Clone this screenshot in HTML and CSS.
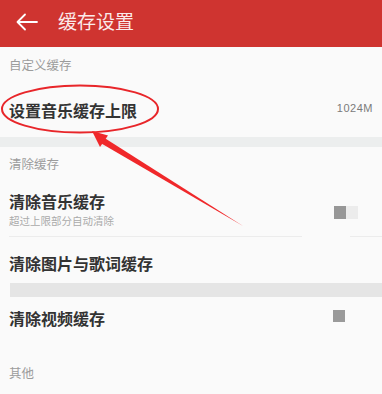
FILE: index.html
```html
<!DOCTYPE html>
<html>
<head>
<meta charset="utf-8">
<link rel="stylesheet" href="styles.css">
</head>
<body>
<div class="page">
  <div class="header">
    <svg class="back" width="22" height="18" viewBox="0 0 22 18"><path d="M21 9H2M9 1.5L1.5 9L9 16.5" fill="none" stroke="#fff" stroke-width="1.8" stroke-linecap="round" stroke-linejoin="round"/></svg>
    <span class="title">缓存设置</span>
  </div>
  <div class="label l1">自定义缓存</div>
  <div class="item i1">
    <span class="name">设置音乐缓存上限</span>
    <span class="value">1024M</span>
  </div>
  <div class="band b1"></div>
  <div class="label l2">清除缓存</div>
  <div class="item i2">
    <div class="texts">
      <span class="name">清除音乐缓存</span>
      <span class="sub">超过上限部分自动清除</span>
    </div>
    <span class="toggle"><span class="knob"></span><span class="track"></span></span>
  </div>
  <div class="divider"><span class="dl"></span><span class="dr"></span></div>
  <div class="item i3"><span class="name">清除图片与歌词缓存</span></div>
  <div class="band b2"></div>
  <div class="item i4">
    <span class="name">清除视频缓存</span>
    <span class="square"></span>
  </div>
  <div class="label l3">其他</div>
  <svg class="annot" width="382" height="394" viewBox="0 0 382 394">
    <ellipse cx="80" cy="109" rx="78" ry="23.5" fill="none" stroke="#e8262a" stroke-width="2"/>
    <polygon points="98.4,141.8 101.8,136.2 243,226" fill="#f0282a"/>
    <polygon points="92,131 108,135.5 100,147" fill="#f0282a"/>
  </svg>
</div>
</body>
</html>
```

FILE: styles.css
```css
html, body { margin: 0; padding: 0; }
body {
  width: 382px;
  height: 394px;
  overflow: hidden;
  background: #fafafa;
  font-family: "Noto Sans CJK SC", "Noto Sans", sans-serif;
}
.page { position: relative; width: 382px; height: 394px; }
.header {
  height: 47px;
  background: #cf3430;
  display: flex;
  align-items: center;
  padding-left: 16px;
  box-sizing: border-box;
}
.back { display: block; margin-top: -4px; }
.title {
  color: #fbeaea;
  font-size: 19px;
  margin-left: 20px;
  margin-top: -5px;
  line-height: 20px;
}
.label {
  color: #9c9c9c;
  font-size: 12.5px;
  line-height: 14px;
  padding-left: 9px;
  box-sizing: border-box;
}
.l1 { height: 36px; padding-top: 11px; }
.l2 { height: 34px; padding-top: 10px; }
.l3 { padding-top: 21px; }
.item {
  display: flex;
  align-items: center;
  justify-content: space-between;
  padding-left: 9px;
  box-sizing: border-box;
}
.name {
  font-size: 16px;
  font-weight: 700;
  color: #333;
  line-height: 16px;
  letter-spacing: 0;
}
.i1 { height: 54px; padding-right: 9px; }
.value { font-size: 11px; color: #7a7a7a; font-family: "Liberation Sans", sans-serif; letter-spacing: 0.5px; margin-top: -4px; }
.band { background: #eceeee; }
.b1 { height: 10px; }
.b2 { height: 14px; margin-left: 10px; background: #e5e5e5; }
.i2 { height: 55px; align-items: flex-start; padding-top: 12px; padding-right: 24px; }
.texts { display: flex; flex-direction: column; }
.sub { font-size: 10.5px; color: #aaa; line-height: 12px; margin-top: 5.5px; }
.toggle { display: flex; margin-top: 13px; }
.knob { width: 12px; height: 13px; background: #979797; }
.track { width: 12px; height: 13px; background: #ececec; }
.divider { height: 1px; display: flex; justify-content: space-between; }
.dl { width: 293px; margin-left: 9px; background: #ececec; }
.dr { width: 32px; background: #ececec; }
.i3 { height: 46px; align-items: flex-start; padding-top: 18px; }
.i4 { height: 48px; align-items: flex-start; padding-top: 13px; padding-right: 37px; }
.square { width: 12px; height: 12px; background: #9a9a9a; margin-top: 0px; }
.annot { position: absolute; left: 0; top: 0; pointer-events: none; }
```
